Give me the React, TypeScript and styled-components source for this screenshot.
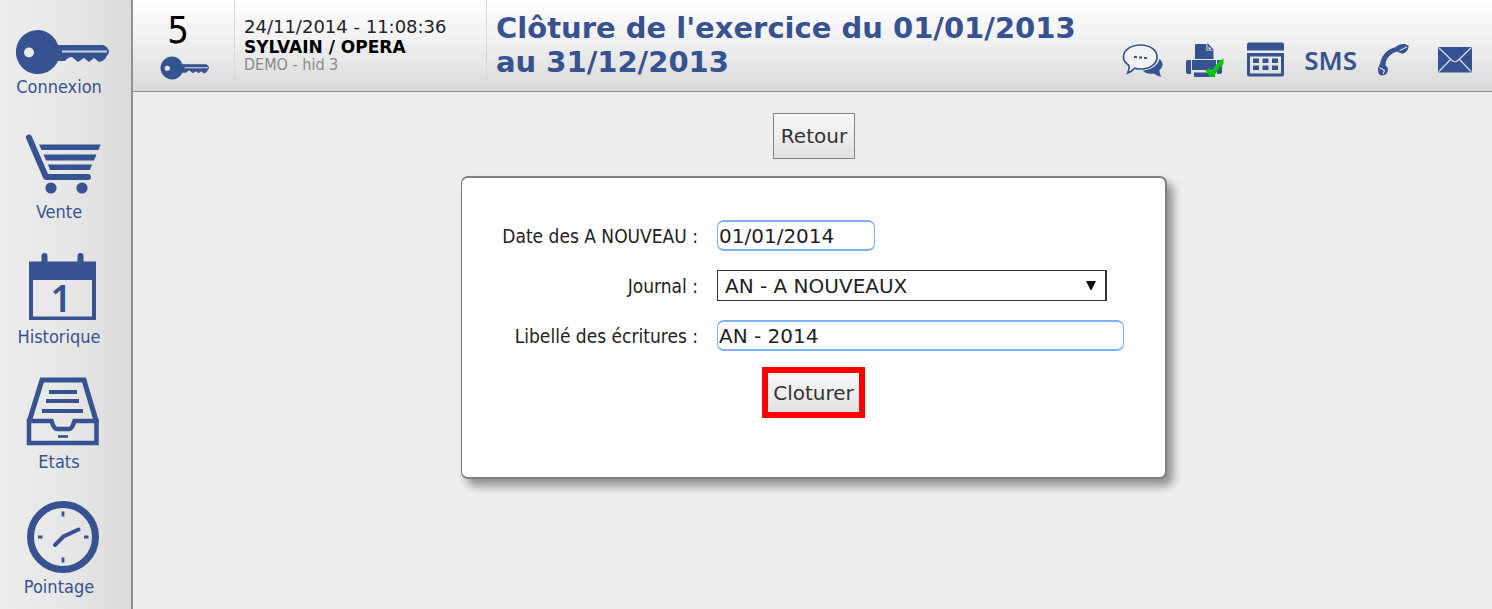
import React from 'react';
import styled, { createGlobalStyle } from 'styled-components';

const BLUE = '#365291';
const SANS = '"DejaVu Sans", Verdana, sans-serif';
const NARROW = '"DejaVu Sans Condensed", "DejaVu Sans", Tahoma, sans-serif';

const GlobalStyle = createGlobalStyle`
  * { box-sizing: border-box; }
  body { margin: 0; background: #eeeeee; font-family: ${SANS}; color: #222; }
`;

const Page = styled.div`
  display: flex;
  min-height: 100vh;
`;

const Sidebar = styled.nav`
  flex: none;
  display: flex;
  flex-direction: column;
  gap: 27px;
  width: 133px;
  border-right: 2px solid #909090;
  background: linear-gradient(to right, #ececec, #e7e7e7 50%, #dbdbdb);
`;

const SideLink = styled.a`
  display: flex;
  flex-direction: column;
  width: 118px;
  color: ${BLUE};
  font: 18px/22px ${NARROW};
  text-align: center;
  text-decoration: none;

  svg { display: block; }
`;

const Content = styled.div`
  flex: 1;
  min-width: 0;
`;

const Header = styled.header`
  display: flex;
  min-height: 92px;
  border-bottom: 1px solid #8c8c8c;
  background: linear-gradient(#ffffff, #f2f2f2 40%, #dadada);
`;

const PostCell = styled.div`
  flex: none;
  width: 102px;
  padding: 8px 0 0 27px;
  border-right: 1px solid #d8d8d8;
`;

const PostNumber = styled.div`
  width: 36px;
  font: 38px/44px ${NARROW};
  color: #000;
  text-align: center;
`;

const KeyLink = styled.a`
  display: block;
  margin-top: 4px;

  svg { display: block; }
`;

const UserCell = styled.div`
  flex: none;
  width: 252px;
  padding: 17px 0 0 9px;
  border-right: 1px solid #d8d8d8;
  font-size: 18px;
  line-height: 20px;
  white-space: nowrap;
`;

const UserName = styled.div`
  font-size: 17px;
  font-weight: bold;
  color: #000;
`;

const UserSite = styled.div`
  font: 16px/16px ${NARROW};
  color: #888;
`;

const Title = styled.h1`
  flex: 1;
  margin: 0;
  padding: 11px 20px 0 9px;
  color: ${BLUE};
  font-size: 29px;
  line-height: 34px;
`;

const Tools = styled.div`
  flex: none;
  display: flex;
  align-items: flex-end;
  gap: 20px;
  padding: 0 19px 13px 0;
`;

const Tool = styled.a`
  min-width: 36px;
  color: ${BLUE};
  font: 600 26px/36px "Noto Sans", "Open Sans", sans-serif;
  text-decoration: none;

  svg { display: block; }
`;

const Main = styled.main`
  display: flex;
  flex-direction: column;
  align-items: center;
  gap: 17px;
  padding: 21px 0 20px 3px;
`;

const Button = styled.button<{ $highlight?: boolean }>`
  height: ${(p) => (p.$highlight ? 51 : 46)}px;
  padding: 0 ${(p) => (p.$highlight ? 5 : 7)}px;
  border: ${(p) => (p.$highlight ? '6px solid #fe0000' : '1px solid #858585')};
  background: linear-gradient(#f8f8f8, #e2e2e2);
  color: #333;
  font: 20px/24px ${SANS};
  cursor: pointer;
`;

const Panel = styled.form`
  display: flex;
  flex-direction: column;
  align-items: center;
  gap: 16px;
  width: 52%;
  min-width: 706px;
  padding: 42px 0 59px;
  border: 2px solid #7f7f7f;
  border-width: 2px 2px 2px 1px;
  border-radius: 7px;
  background: #fff;
  box-shadow: 6px 7px 10px rgba(0, 0, 0, 0.4);
`;

const Fields = styled.div`
  align-self: stretch;
  display: grid;
  grid-template-columns: 236px 407px;
  align-items: center;
  gap: 19px;
`;

const Label = styled.label`
  font: 19px/24px ${NARROW};
  text-align: right;
  white-space: nowrap;
`;

const TextInput = styled.input<{ $width: string }>`
  width: ${(p) => p.$width};
  height: 31px;
  padding: 0 1px;
  border: 1px solid #7fb0f3;
  border-width: 2px 1px;
  border-radius: 7px;
  background: #fff;
  color: #222;
  font: 20px/24px ${SANS};
  outline: none;
`;

const SelectBox = styled.div`
  position: relative;
  width: 390px;
`;

const Select = styled.select`
  display: block;
  appearance: none;
  width: 100%;
  height: 31px;
  padding: 0 30px 0 7px;
  border: 1px solid #333;
  border-right-width: 2px;
  border-radius: 0;
  background: #fff;
  color: #222;
  font: 20px/24px ${SANS};
`;

const Arrow = styled.svg`
  position: absolute;
  top: 11px;
  right: 11px;
  pointer-events: none;
`;

const KeyShape = () => (
  <>
    <path
      fillRule="evenodd"
      d="M37.500 30A22 22 0 0 1 58 45H103Q109 47 109 52.500L105 59Q102 62 99 62L94 58L89 62L84 58L78 62L72 57Q68 57 65 61H58A22 22 0 1 1 37.500 30ZM29 47.500A5 5 0 1 0 29 57.500A5 5 0 1 0 29 47.500Z"
      fill={BLUE}
    />
    <path d="M62 51.500H107" stroke="#cdd5e4" strokeWidth="2.200" />
  </>
);

const SideSvg = ({ children }: { children: React.ReactNode }) => (
  <svg width="118" height="76" viewBox="0 0 118 76" fill="none" aria-hidden="true">
    {children}
  </svg>
);

const CartIcon = () => (
  <SideSvg>
    <path d="M29 12.500L46 52H88" stroke={BLUE} strokeWidth="6" strokeLinecap="round" strokeLinejoin="round" />
    <path d="M39 19.500H100.500L98.500 25H41.500ZM43.500 29.500H96.500L94 35.500H46ZM48 39.500H92L90 45H50Z" fill={BLUE} />
    <circle cx="51" cy="63" r="5.600" fill={BLUE} />
    <circle cx="82" cy="63" r="5.600" fill={BLUE} />
  </SideSvg>
);

const CalendarIcon = () => (
  <SideSvg>
    <path d="M44.500 6V14M80.500 6V14" stroke={BLUE} strokeWidth="6" strokeLinecap="round" />
    <path fillRule="evenodd" d="M29 11.500H96V70H29ZM33 30V66.500H92V30Z" fill={BLUE} />
    <text x="61" y="62" textAnchor="middle" fill={BLUE} fontFamily="Noto Sans, sans-serif" fontWeight="600" fontSize="37">1</text>
  </SideSvg>
);

const TrayIcon = () => (
  <SideSvg>
    <path d="M29 47L42 5H84L96.500 47" stroke={BLUE} strokeWidth="5" />
    <path d="M29 46H51.500Q54 54 57 54H69Q72 54 74.500 46H96.500V68H29Z" stroke={BLUE} strokeWidth="4.500" />
    <path d="M49 17H77M46 26H79M42 36H83" stroke={BLUE} strokeWidth="3.800" />
    <path d="M58 61.500H68" stroke={BLUE} strokeWidth="2.600" />
  </SideSvg>
);

const ClockIcon = () => (
  <SideSvg>
    <circle cx="63" cy="37" r="32.500" stroke={BLUE} strokeWidth="7" />
    <path d="M63 11.500V16.500M63 57.500V62.500M38 37H42.500M84 37H88.500" stroke={BLUE} strokeWidth="2.800" />
    <path d="M55 45L63.500 36.500L78.500 29.500" stroke={BLUE} strokeWidth="4" strokeLinecap="round" />
  </SideSvg>
);

const ChatIcon = () => (
  <svg width="44" height="36" viewBox="0 0 44 36" fill="none" aria-hidden="true">
    <path d="M37.500 17C41.500 20 41.500 25 37.500 28C37.500 31 38 33 39.500 34.500C36 34.500 33.500 33 32 31.500C27 32.500 23 31 20.500 28.500C29 28 35.500 24 37.500 17Z" fill={BLUE} />
    <path
      d="M18.500 3C28 3 35 8 35 15S28 27 18.500 27Q15 27 12.500 26.200Q10.500 29 5.800 31Q7.500 27 7 23.500Q1.500 20 1.500 15C1.500 8 9 3 18.500 3Z"
      stroke={BLUE}
      strokeWidth="1.700"
      fill="#f3f3f3"
    />
    <path d="M12 15H15M17 15.500H20M22 16H25" stroke={BLUE} strokeWidth="2.200" />
  </svg>
);

const PrinterIcon = () => (
  <svg width="40" height="36" viewBox="0 0 40 36" fill="none" aria-hidden="true">
    <path d="M10 2H20.500V9H27.500V17H9V3Q9 2 10 2Z" fill={BLUE} />
    <path d="M22 2.500L27 8H22Z" stroke={BLUE} strokeWidth="1.200" />
    <path d="M2 18H5V32H2Q0 32 0 30V20Q0 18 2 18ZM6 18H30V28H6ZM31 18H34Q36 18 36 20V30Q36 32 34 32H31ZM8 30.500H29V35H8Z" fill={BLUE} />
    <path d="M19.500 28.500L23 26L26 29Q30 21 37.500 16.500V22Q31 28 28 35H24Z" fill="#08c40c" />
  </svg>
);

const PlannerIcon = () => (
  <svg width="38" height="36" viewBox="0 0 38 36" aria-hidden="true">
    <path d="M3 0.500H36Q38 0.500 38 2.500V8.500H1V2.500Q1 0.500 3 0.500Z" fill={BLUE} />
    <path fillRule="evenodd" d="M1 11H38V32.500Q38 34.500 36 34.500H3Q1 34.500 1 32.500ZM4 14.500V31.500H35V14.500Z" fill={BLUE} />
    <path d="M7 16.500H13V21H7ZM16.500 16.500H22.500V21H16.500ZM26 16.500H32V21H26ZM7 23.500H13V28H7ZM16.500 23.500H22.500V28H16.500ZM26 23.500H32V28H26Z" fill={BLUE} />
  </svg>
);

const PhoneIcon = () => (
  <svg width="40" height="36" viewBox="0 0 40 36" fill="none" aria-hidden="true">
    <path
      d="M19 5C22 1.500 28 1 31.500 3.500C32 6 30 10 26.500 11.500C24 11.500 22 11 20.500 9.500C13 11 8.500 17 8.500 23.500C11 25 11.500 27 10.500 30C9 33 5.500 34.500 2.500 32.500C0 29 1 24.500 3 22C4.500 13.500 10 7 19 5Z"
      fill={BLUE}
    />
    <path d="M22.500 8.500L30 5M2.500 25.500L7.500 28.500L6 32" stroke="#d4dae6" strokeWidth="1.100" />
  </svg>
);

const MailIcon = () => (
  <svg width="36" height="36" viewBox="0 0 36 36" fill="none" aria-hidden="true">
    <rect x="1" y="5" width="34" height="25.500" rx="1.500" fill={BLUE} />
    <path d="M2 6L15 18.500Q18 21 21 18.500L34 6M2 29.500L13.500 17.500M34 29.500L22.500 17.500" stroke="#d8deea" strokeWidth="1.200" />
  </svg>
);

const sideItems = [
  { label: 'Connexion', icon: <SideSvg><KeyShape /></SideSvg> },
  { label: 'Vente', icon: <CartIcon /> },
  { label: 'Historique', icon: <CalendarIcon /> },
  { label: 'Etats', icon: <TrayIcon /> },
  { label: 'Pointage', icon: <ClockIcon /> },
];

export default function App() {
  return (
    <>
      <GlobalStyle />
      <Page>
        <Sidebar>
          {sideItems.map((item) => (
            <SideLink href="#" key={item.label}>
              {item.icon}
              {item.label}
            </SideLink>
          ))}
        </Sidebar>
        <Content>
          <Header>
            <PostCell>
              <PostNumber>5</PostNumber>
              <KeyLink href="#" aria-label="Connexion">
                <svg width="50" height="24" viewBox="15 29 96 46" aria-hidden="true">
                  <KeyShape />
                </svg>
              </KeyLink>
            </PostCell>
            <UserCell>
              <div>24/11/2014 - 11:08:36</div>
              <UserName>SYLVAIN / OPERA</UserName>
              <UserSite>DEMO - hid 3</UserSite>
            </UserCell>
            <Title>Clôture de l'exercice du 01/01/2013 au 31/12/2013</Title>
            <Tools>
              <Tool href="#" aria-label="Messages"><ChatIcon /></Tool>
              <Tool href="#" aria-label="Imprimante"><PrinterIcon /></Tool>
              <Tool href="#" aria-label="Agenda"><PlannerIcon /></Tool>
              <Tool href="#">SMS</Tool>
              <Tool href="#" aria-label="Téléphone"><PhoneIcon /></Tool>
              <Tool href="#" aria-label="Courrier"><MailIcon /></Tool>
            </Tools>
          </Header>
          <Main>
            <Button type="button">Retour</Button>
            <Panel onSubmit={(e) => e.preventDefault()}>
              <Fields>
                <Label htmlFor="date">Date des A NOUVEAU :</Label>
                <TextInput id="date" $width="158px" defaultValue="01/01/2014" />
                <Label htmlFor="journal">Journal :</Label>
                <SelectBox>
                  <Select id="journal" defaultValue="AN">
                    <option value="AN">AN - A NOUVEAUX</option>
                  </Select>
                  <Arrow width="10" height="9" viewBox="0 0 10 9" aria-hidden="true">
                    <path d="M0 0H10L5.500 9H4.500Z" fill="#111" />
                  </Arrow>
                </SelectBox>
                <Label htmlFor="libelle">Libellé des écritures :</Label>
                <TextInput id="libelle" $width="100%" defaultValue="AN - 2014" />
              </Fields>
              <Button type="submit" $highlight>Cloturer</Button>
            </Panel>
          </Main>
        </Content>
      </Page>
    </>
  );
}
